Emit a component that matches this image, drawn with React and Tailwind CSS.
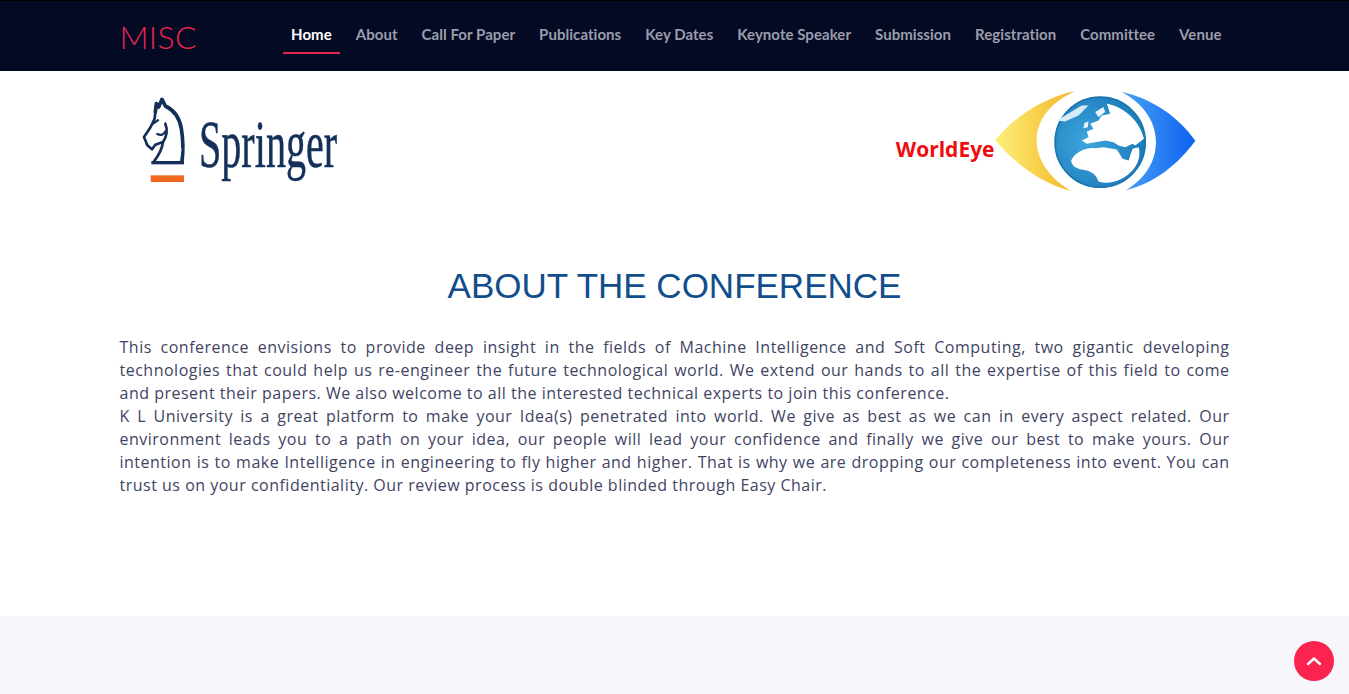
const NAV = ["About","Call For Paper","Publications","Key Dates","Keynote Speaker","Submission","Registration","Committee","Venue"];

function Horse() {
  return (
    <svg width="60" height="95" viewBox="0 0 180 285" fill="none" className="block shrink-0">
      <g stroke="#14305a" strokeLinecap="round" strokeLinejoin="round">
        <path d="M52 60 L55 35 L62 45 L72 22 L82 42 C110 55 125 80 130 110 C135 140 136 175 132 208" strokeWidth="11" />
        <path d="M52 60 L50 80 L38 105 L18 135 L28 160 L42 172 L52 158 L75 150 C85 135 90 115 82 95" strokeWidth="8" />
        <path d="M58 126 C68 132 78 128 82 118 M44 95 L60 85" strokeWidth="7" />
        <path d="M75 150 C72 175 62 190 48 208" strokeWidth="8" />
        <path d="M120 130 L124 150 M128 170 L126 190" strokeWidth="5" stroke="#fff" />
      </g>
      <rect x="40" y="207" width="98" height="10" fill="#14305a" />
      <rect x="38" y="250" width="100" height="20" fill="#f26a21" />
    </svg>
  );
}

function Eye() {
  return (
    <svg width="202" height="102" viewBox="330 30 605 305" className="block shrink-0">
      <defs>
        <linearGradient id="yw" x1="0" x2="1" y1="0" y2="0">
          <stop offset="0" stopColor="#fdf07a" />
          <stop offset="0.5" stopColor="#f8d24f" />
          <stop offset="1" stopColor="#f0b52a" />
        </linearGradient>
        <linearGradient id="bw" x1="0" x2="1" y1="0" y2="0">
          <stop offset="0" stopColor="#4aa5f5" />
          <stop offset="1" stopColor="#0d5ff0" />
        </linearGradient>
        <radialGradient id="gl" cx="0.35" cy="0.5" r="0.75">
          <stop offset="0" stopColor="#3fa6de" />
          <stop offset="1" stopColor="#1673b4" />
        </radialGradient>
      </defs>
      <path d="M330 180 C390 110 470 55 570 33 C490 70 455 125 455 180 C455 240 495 295 558 332 C470 310 390 250 330 180Z" fill="url(#yw)" />
      <path d="M930 182 C880 110 800 55 708 35 C775 70 812 125 812 185 C812 245 780 295 722 330 C810 310 880 250 930 182Z" fill="url(#bw)" />
      <g transform="translate(480 36)">
        <circle cx="165" cy="150" r="135" fill="url(#gl)" stroke="#1b77ad" strokeWidth="5" />
        <path d="M185 35 C240 45 285 90 296 140 L270 160 L262 155 L240 165 L220 160 L205 150 L180 145 L150 150 L125 155 L110 145 L130 135 L125 118 L145 110 L135 95 L160 85 L170 70 L195 65 Z" fill="#fff" />
        <path d="M78 205 C90 180 120 165 150 168 L175 165 L215 172 L232 200 L250 205 L262 170 L280 165 C290 200 270 240 225 262 C200 272 180 275 160 268 C150 240 130 235 110 232 C95 230 80 222 78 205Z" fill="#fff" />
        <path d="M35 85 L110 40 L130 40 L100 70 L60 88Z" fill="#d5ecf8" />
        <path d="M118 92 L130 88 L128 105 L115 108Z" fill="#e7f4fb" />
        <path d="M150 60 L175 45 L180 60 L160 75Z" fill="#e7f4fb" />
      </g>
    </svg>
  );
}

export default function App() {
  return (
    <div className="min-h-[694px] bg-white font-['Open_Sans',sans-serif] relative overflow-hidden">
      <header className="h-[71px] bg-[#050a24] border-t border-black">
        <div className="mx-auto w-[1110px] h-full flex items-start">
          <a className="font-['Lato',sans-serif] font-light text-[32px] text-[#e5264c] tracking-[0.3px] leading-none w-[164px] mt-[20px]">MISC</a>
          <nav className="flex items-stretch gap-2 h-[45px] mt-[8px] font-['Lato',sans-serif] font-bold text-[15px] tracking-[0.05px]">
            <a className="px-2 pt-[14px] text-white border-b-2 border-[#e5264c]">Home</a>
            {NAV.map((n) => (
              <a key={n} className="px-2 pt-[14px] text-[#9a9dab] whitespace-nowrap">{n}</a>
            ))}
          </nav>
        </div>
      </header>

      <section className="mx-auto w-[1110px] h-[135px] flex items-start justify-between">
        <div className="flex items-start ml-[18px] mt-[21px]">
          <Horse />
          <span className="font-['Liberation_Serif',serif] text-[68px] leading-none text-[#14305a] [-webkit-text-stroke:0.5px_#14305a] ml-[1px] mt-[18px] origin-left scale-x-[0.59] inline-block">Springer</span>
        </div>
        <div className="flex items-start mr-[33px] mt-[19px]">
          <span className="text-[21px] font-bold text-[#ee0c10] mt-[44px]">WorldEye</span>
          <Eye />
        </div>
      </section>

      <main className="mx-auto w-[1110px]">
        <h1 className="font-['Liberation_Sans',sans-serif] text-[35px] leading-[40px] text-[#114e8b] text-center mt-[60px]">ABOUT THE CONFERENCE</h1>
        <p className="mt-[30px] text-[16px] tracking-[0.5px] leading-[23px] text-[#3f4463] text-justify">
          This conference envisions to provide deep insight in the fields of Machine Intelligence and Soft Computing, two gigantic developing technologies that could help us re-engineer the future technological world. We extend our hands to all the expertise of this field to come and present their papers. We also welcome to all the interested technical experts to join this conference.
          <br />
          K L University is a great platform to make your Idea(s) penetrated into world. We give as best as we can in every aspect related. Our environment leads you to a path on your idea, our people will lead your confidence and finally we give our best to make yours. Our intention is to make Intelligence in engineering to fly higher and higher. That is why we are dropping our completeness into event. You can trust us on your confidentiality. Our review process is double blinded through Easy Chair.
        </p>
      </main>

      <footer className="absolute left-0 right-0 top-[616px] h-[78px] bg-[#f6f6fb]" />

      <button className="absolute left-[1294px] top-[641px] w-10 h-10 rounded-full bg-[#fb2350] flex items-center justify-center">
        <svg width="16" height="10" viewBox="0 0 16 10" fill="none" stroke="#fff" strokeWidth="2.4" strokeLinecap="round" strokeLinejoin="round">
          <path d="M2 8 L8 2.5 L14 8" />
        </svg>
      </button>
    </div>
  );
}
